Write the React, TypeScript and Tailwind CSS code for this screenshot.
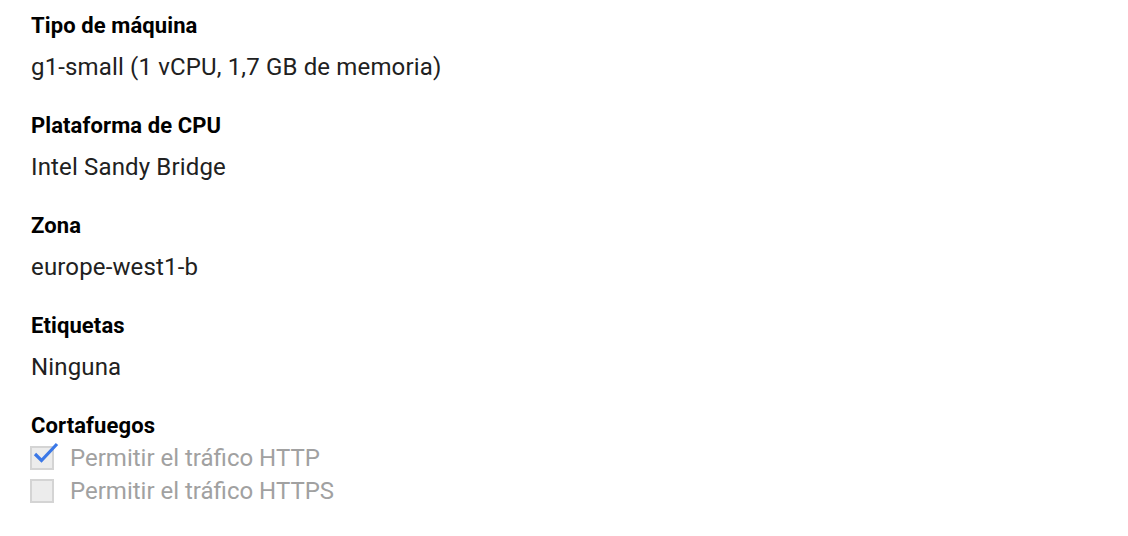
import { Fragment } from "react";

const fields = [
  { label: "Tipo de máquina", value: "g1-small (1 vCPU, 1,7 GB de memoria)" },
  { label: "Plataforma de CPU", value: "Intel Sandy Bridge" },
  { label: "Zona", value: "europe-west1-b" },
  { label: "Etiquetas", value: "Ninguna" },
];

function Checkbox({ checked, label }: { checked: boolean; label: string }) {
  return (
    <div className="flex items-center h-[33px]">
      <div className="relative w-[24px] h-[24px] border-2 border-[#d4d4d4] bg-[#ececec]">
        {checked && (
          <svg
            className="absolute left-[1px] top-[-7px]"
            width="26"
            height="24"
            viewBox="0 0 26 24"
          >
            <path d="M2 13 L8.5 19.5 L24 3" fill="none" stroke="#3b78e7" strokeWidth="3.2" />
          </svg>
        )}
      </div>
      <span className="ml-[16px] text-[24px] text-[#a1a1a1]">{label}</span>
    </div>
  );
}

export default function App() {
  return (
    <div className="bg-white min-h-[536px] px-[31px] pt-[11px] font-['Roboto',sans-serif] text-[#212121]">
      {fields.map((f) => (
        <Fragment key={f.label}>
          <div className="text-[22px] font-bold leading-[30px] tracking-[0.1px] text-black">{f.label}</div>
          <div className="text-[24px] leading-[30px] mt-[11px] mb-[29px] tracking-[0.15px]">{f.value}</div>
        </Fragment>
      ))}
      <div className="text-[22px] font-bold leading-[30px] tracking-[0.1px] text-black">Cortafuegos</div>
      <div className="-ml-[1px] mt-0">
        <Checkbox checked label="Permitir el tráfico HTTP" />
        <Checkbox checked={false} label="Permitir el tráfico HTTPS" />
      </div>
    </div>
  );
}
